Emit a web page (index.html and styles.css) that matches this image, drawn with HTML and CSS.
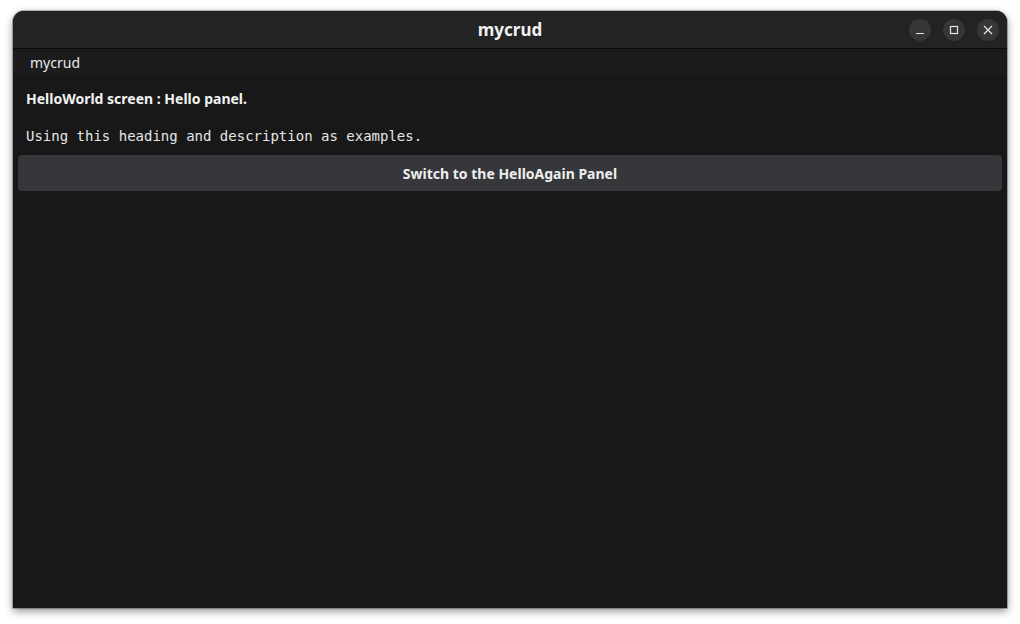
FILE: index.html
```html
<!DOCTYPE html>
<html>
<head>
<meta charset="utf-8">
<link rel="stylesheet" href="styles.css">
</head>
<body>
<div class="window">
  <header class="titlebar">
    <div class="title">mycrud</div>
    <div class="controls">
      <span class="ctl"><svg width="10" height="10" viewBox="0 0 10 10"><line x1="1" y1="8.5" x2="9" y2="8.5" stroke="#e6e6e6" stroke-width="1.2"/></svg></span>
      <span class="ctl"><svg width="10" height="10" viewBox="0 0 10 10"><rect x="1.5" y="1.5" width="7" height="7" fill="none" stroke="#e6e6e6" stroke-width="1.2"/></svg></span>
      <span class="ctl"><svg width="10" height="10" viewBox="0 0 10 10"><path d="M1 1L9 9M9 1L1 9" stroke="#e6e6e6" stroke-width="1.2"/></svg></span>
    </div>
  </header>
  <nav class="menubar"><span class="menu-item">mycrud</span></nav>
  <main class="content">
    <h1 class="heading">HelloWorld screen : Hello panel.</h1>
    <p class="desc">Using this heading and description as examples.</p>
    <button class="btn">Switch to the HelloAgain Panel</button>
  </main>
</div>
</body>
</html>
```
FILE: styles.css
```css
html, body {
  margin: 0;
  padding: 0;
  background: #ffffff;
}
body {
  padding: 11px 0 16px 13px;
  min-height: 624px;
  box-sizing: border-box;
  overflow: hidden;
  font-family: "Noto Sans", "Open Sans", sans-serif;
}
.window {
  width: 994px;
  height: 597px;
  background: #181818;
  border-radius: 11px 11px 0 0;
  box-shadow: 0 3px 9px rgba(0,0,0,0.45), 0 0 0 1px rgba(0,0,0,0.25);
  overflow: hidden;
  display: flex;
  flex-direction: column;
}
.titlebar {
  height: 37px;
  background: #232323;
  border-bottom: 1px solid #0a0a0a;
  display: flex;
  align-items: center;
  justify-content: center;
  position: relative;
  flex-shrink: 0;
}
.title {
  color: #f0f0f0;
  font-weight: 700;
  font-size: 17px;
  line-height: 1;
}
.controls {
  position: absolute;
  right: 8px;
  top: 8px;
  display: flex;
  gap: 12px;
}
.ctl {
  width: 22px;
  height: 22px;
  border-radius: 50%;
  background: #363636;
  display: flex;
  align-items: center;
  justify-content: center;
}
.ctl svg { display: block; }
.menubar {
  height: 27px;
  background: #1c1c1c;
  border-bottom: 1px solid #161616;
  display: flex;
  align-items: center;
  padding-left: 17px;
  flex-shrink: 0;
}
.menu-item {
  color: #e8e8e8;
  font-size: 14px;
}
.content {
  padding: 12px 5px 0 5px;
  display: flex;
  flex-direction: column;
}
.heading {
  margin: 0 0 0 8px;
  font-size: 14px;
  font-weight: 700;
  color: #f2f2f2;
  line-height: 19px;
}
.desc {
  margin: 19px 0 0 8px;
  font-family: "DejaVu Sans Mono", monospace;
  font-size: 14px;
  color: #e6e6e6;
  line-height: 19px;
}
.btn {
  margin-top: 9px;
  height: 36px;
  border: none;
  border-radius: 4px;
  background: #36373b;
  color: #eeeeee;
  font-family: "Noto Sans", "Open Sans", sans-serif;
  font-weight: 700;
  font-size: 14px;
  width: 100%;
}
```
